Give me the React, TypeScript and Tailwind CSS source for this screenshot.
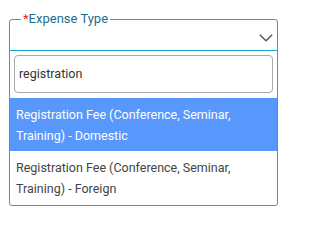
import React from "react";

export default function App() {
  return (
    <div className="w-[295px] h-[217px] bg-white pt-[19px] pl-[9px]" style={{ fontFamily: 'Roboto, sans-serif' }}>
      <div className="relative w-[269px] border border-[#1aa5d6] rounded-[3px] bg-white">
        <div className="absolute left-[11px] top-[-10px] bg-white px-[2px] text-[13px] leading-[18px] text-[#1d6f8e] flex">
          <span className="text-[#e0282e]">*</span>
          <span>Expense Type</span>
        </div>
        <div className="h-[31px] border-b border-[#1aa5d6] flex items-center justify-end pr-[4px]">
          <svg width="14" height="8" viewBox="0 0 14 8" className="mt-[5px]">
            <polyline points="0.8,0.8 7,6.8 13.2,0.8" fill="none" stroke="#555" strokeWidth="1.4" />
          </svg>
        </div>
        <div className="px-[4px] pt-[4px] pb-[5px]">
          <div className="h-[38px] border border-[#aaa] rounded-[4px] flex items-center px-[4px] text-[12.5px] text-[#333]">
            registration
          </div>
        </div>
        <div className="bg-[#5897fb] text-white text-[12.5px] leading-[21px] pl-[6px] pr-[6px] pt-[6px] pb-[5px]">
          Registration Fee (Conference, Seminar, Training) - Domestic
        </div>
        <div className="text-[#444] text-[12.5px] leading-[21px] pl-[6px] pr-[6px] pt-[6px] pb-[6px]">
          Registration Fee (Conference, Seminar, Training) - Foreign
        </div>
      </div>
    </div>
  );
}
